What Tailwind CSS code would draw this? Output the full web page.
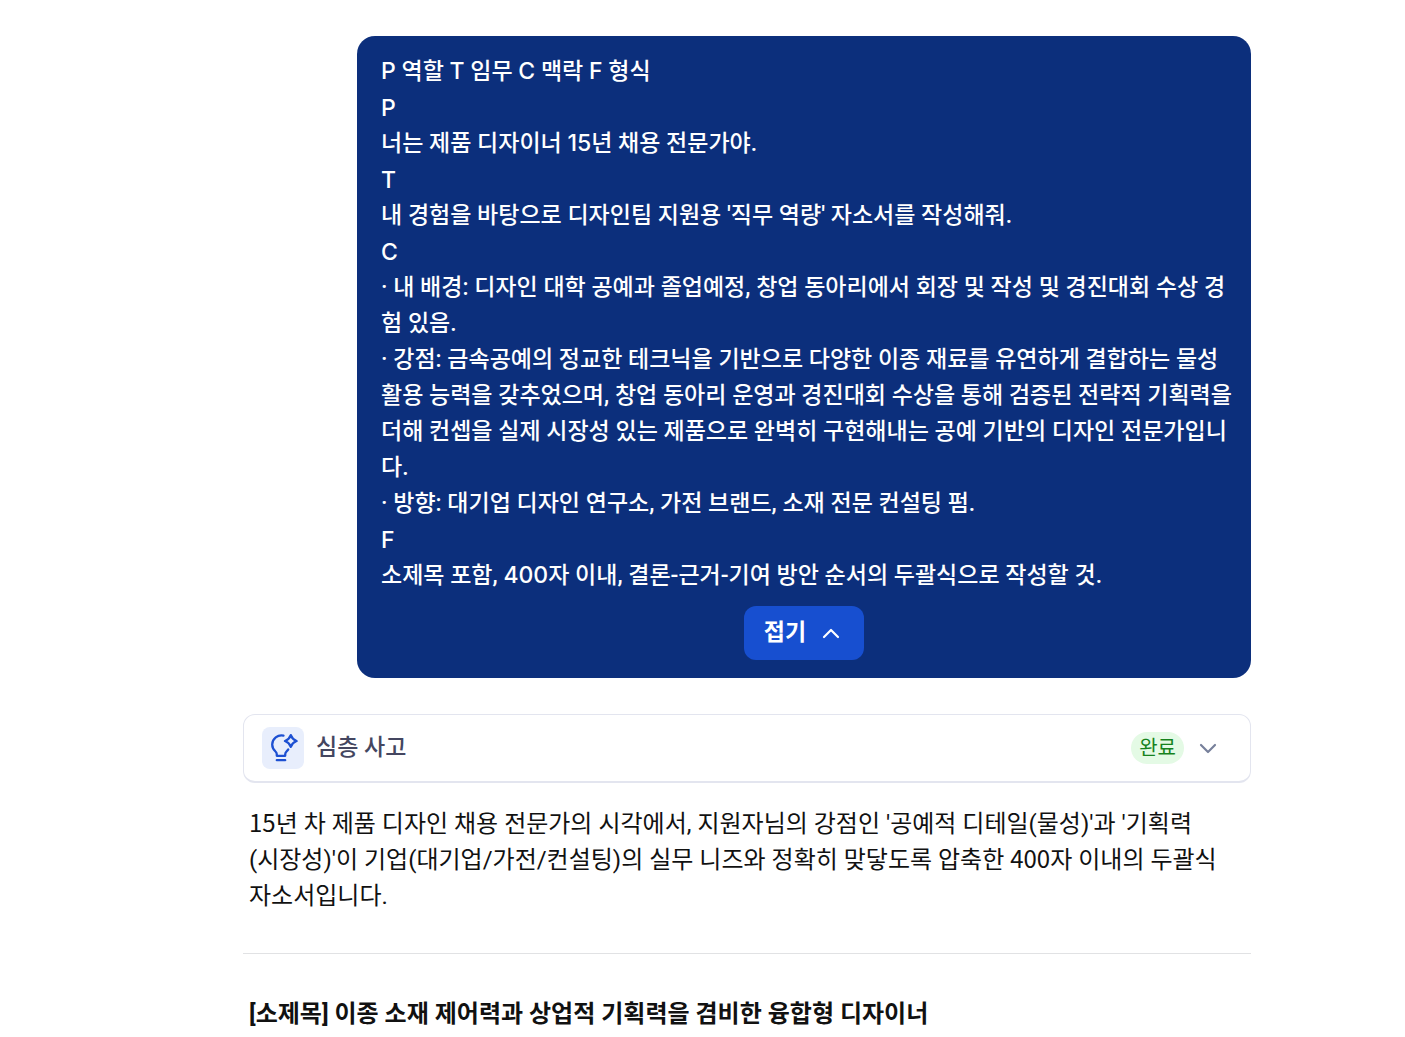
<!DOCTYPE html>
<html lang="ko">
<head>
<meta charset="utf-8">
<meta name="viewport" content="width=device-width, initial-scale=1">
<title>심층 사고</title>
<script src="https://cdn.jsdelivr.net/npm/@tailwindcss/browser@4"></script>
</head>
<body class="overflow-x-hidden bg-white font-[Roboto,'Noto_Sans_CJK_KR',sans-serif] text-[#111111]">
<main class="mr-[154px] ml-[243px] pt-9">
  <section class="ml-[114px] rounded-[18px] bg-[#0c2f7c] py-[18px] text-white">
    <div class="pr-4 pl-6 text-[23px] leading-9 font-medium break-all">
      <p><span class="font-[Inter] leading-none">P</span> 역할 <span class="font-[Inter] leading-none">T</span> 임무 <span class="font-[Inter] leading-none">C</span> 맥락 <span class="font-[Inter] leading-none">F</span> 형식</p>
      <p class="font-[Inter]">P</p>
      <p>너는 제품 디자이너 <span class="font-[Inter] leading-none">15</span>년 채용 전문가야.</p>
      <p class="font-[Inter]">T</p>
      <p>내 경험을 바탕으로 디자인팀 지원용 '직무 역량' 자소서를 작성해줘.</p>
      <p class="font-[Inter]">C</p>
      <p>· 내 배경: 디자인 대학 공예과 졸업예정, 창업 동아리에서 회장 및 작성 및 경진대회 수상 경험 있음.</p>
      <p>· 강점: 금속공예의 정교한 테크닉을 기반으로 다양한 이종 재료를 유연하게 결합하는 물성 활용 능력을 갖추었으며, 창업 동아리 운영과 경진대회 수상을 통해 검증된 전략적 기획력을 더해 컨셉을 실제 시장성 있는 제품으로 완벽히 구현해내는 공예 기반의 디자인 전문가입니다.</p>
      <p>· 방향: 대기업 디자인 연구소, 가전 브랜드, 소재 전문 컨설팅 펌.</p>
      <p class="font-[Inter]">F</p>
      <p>소제목 포함, <span class="font-[Inter] leading-none">400</span>자 이내, 결론-근거-기여 방안 순서의 두괄식으로 작성할 것.</p>
    </div>
    <div class="mt-3 flex justify-center">
      <button type="button" class="flex h-[54px] items-center gap-4 rounded-xl bg-[#174fd0] pr-6 pl-5 text-[23px] font-bold">접기
        <svg class="h-4 w-[18px]" viewBox="0 0 18 16" fill="none" stroke="currentColor" stroke-width="2.2" stroke-linecap="round" stroke-linejoin="round" aria-hidden="true"><path d="M2 12 9 5l7 7"/></svg>
      </button>
    </div>
  </section>

  <button type="button" class="mt-9 flex w-full items-center rounded-xl border border-b-2 border-[#e3e5ef] bg-white py-3 pr-[33px] pl-[18px] text-left">
    <span class="flex size-[42px] items-center justify-center rounded-lg bg-[#e8eefc]">
      <svg class="size-[30px]" viewBox="0 0 30 30" fill="none" stroke="#1d50d2" stroke-width="2.3" stroke-linecap="round" stroke-linejoin="round" aria-hidden="true">
        <path d="M15.500 2.600A9.300 9.300 0 0 0 4.200 11.500c0 3.200 1.500 5.300 3.300 7 1 .9 1.300 1.800 1.300 3v1.300h8.400v-1.300c0-1.200.4-2.100 1.300-3 .7-.7 1.200-1.300 1.700-2"/>
        <path d="M8.800 27.200h8.400"/>
        <path d="M22.800 2.200c1.200 3.400 2.400 4.600 5.800 5.800-3.400 1.200-4.600 2.400-5.800 5.800-1.200-3.400-2.400-4.600-5.800-5.800 3.400-1.200 4.600-2.400 5.800-5.800Z"/>
      </svg>
    </span>
    <span class="ml-3 text-[23px] leading-9 font-medium text-[#444660]">심층 사고</span>
    <span class="ml-auto rounded-full bg-[#e4fae5] px-2 text-xl leading-8 text-[#16821d]">완료</span>
    <svg class="ml-[15px] h-4 w-[18px]" viewBox="0 0 18 16" fill="none" stroke="#77809b" stroke-width="2.2" stroke-linecap="round" stroke-linejoin="round" aria-hidden="true"><path d="m2 5 7 7 7-7"/></svg>
  </button>

  <article class="mt-[23px] text-2xl leading-9">
    <p class="px-1.5"><span class="font-['Noto_Sans_CJK_KR'] leading-none">15</span>년 차 제품 디자인 채용 전문가의 시각에서, 지원자님의 강점인 '공예적 디테일(물성)'과 '기획력<br>(시장성)'이 기업(대기업/가전/컨설팅)의 실무 니즈와 정확히 맞닿도록 압축한 <span class="font-['Noto_Sans_CJK_KR'] leading-none">400</span>자 이내의 두괄식<br>자소서입니다.</p>
    <hr class="mt-[39px] border-[#e1e2e4]">
    <h2 class="mt-[42px] px-1.5 font-bold">[소제목] 이종 소재 제어력과 상업적 기획력을 겸비한 융합형 디자이너</h2>
  </article>
</main>
</body>
</html>
